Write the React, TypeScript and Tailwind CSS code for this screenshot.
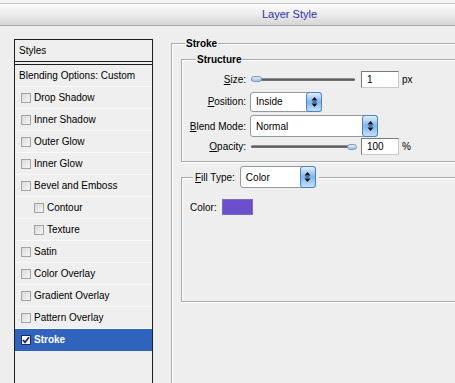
import React from "react";

function Check({ checked = false }: { checked?: boolean }) {
  if (checked) {
    return (
      <div className="w-[10px] h-[10px] bg-white border border-[#1c2a6b] flex items-center justify-center shrink-0">
        <svg width="8" height="8" viewBox="0 0 8 8">
          <path d="M1 4 L3 6.3 L7 1.3" stroke="#1b1f7a" strokeWidth="1.8" fill="none" />
        </svg>
      </div>
    );
  }
  return (
    <div className="w-[10px] h-[10px] border border-[#a3a3a3] bg-gradient-to-br from-[#d9d9d9] to-[#f7f7f7] shrink-0" />
  );
}

function Row({
  label,
  indent = false,
  selected = false,
}: {
  label: string;
  indent?: boolean;
  selected?: boolean;
}) {
  return (
    <div
      className={
        selected
          ? "h-[22px] flex items-center gap-[3px] pl-[6px] bg-[#3063bb] text-white font-bold border-b border-[#3063bb]"
          : indent
          ? "h-[22px] flex items-center gap-[3px] pl-[19px] border-b border-[#f9f9f9]"
          : "h-[22px] flex items-center gap-[3px] pl-[6px] border-b border-[#f9f9f9]"
      }
    >
      <Check checked={selected} />
      <span className="leading-none">{label}</span>
    </div>
  );
}

function Spinner() {
  return (
    <div className="w-[16px] -my-[1px] -mr-[1px] rounded-[3px] border border-[#4b82c8] bg-gradient-to-b from-[#e2effd] via-[#7fb4ee] to-[#c4e0fb] flex items-center justify-center shrink-0">
      <svg width="7" height="12" viewBox="0 0 7 12">
        <polygon points="3.5,1 6.5,4.5 0.5,4.5" fill="#111" />
        <rect x="1.5" y="5.6" width="4" height="0.8" fill="#111" />
        <polygon points="0.5,7.5 6.5,7.5 3.5,11" fill="#111" />
      </svg>
    </div>
  );
}

function Select({ cls, text }: { cls: string; text: string }) {
  return (
    <div className={cls}>
      <div className="flex-1 flex items-center pl-[5px] text-[10px] text-black">{text}</div>
      <Spinner />
    </div>
  );
}

function Slider({ right = false }: { right?: boolean }) {
  return (
    <div className="relative w-[104px] h-[8px] flex items-center">
      <div className="w-full h-[3px] rounded-full bg-gradient-to-b from-[#a9a9a9] via-[#5e5e5e] to-[#7a7a7a]" />
      <div
        className={
          right
            ? "absolute right-[-2px] top-[1px] w-[10px] h-[6px] rounded-full border border-[#7f9cbc] bg-gradient-to-b from-[#e4eef9] to-[#9dbfe2]"
            : "absolute left-[0px] top-[1px] w-[11px] h-[6px] rounded-full border border-[#7f9cbc] bg-gradient-to-b from-[#e4eef9] to-[#9dbfe2]"
        }
      />
    </div>
  );
}

function Field({ value }: { value: string }) {
  return (
    <div className="w-[38px] h-[17px] bg-white border border-[#7b7b7b] border-r-[#c9c9c9] border-b-[#c9c9c9] flex items-center pl-[5px] text-[10px]">
      {value}
    </div>
  );
}

export default function App() {
  return (
    <div
      className="w-[455px] h-[383px] overflow-hidden bg-[#eeeeee] text-black text-[10px]"
      style={{ fontFamily: '"Liberation Sans", Arial, sans-serif' }}
    >
      {/* title bar */}
      <div className="h-[26px] pt-[3px] bg-[#f3f3f3]">
        <div className="h-[23px] border-t border-[#c4c4c4] border-b border-b-[#a9a9a9] bg-gradient-to-b from-[#fbfbfb] via-[#ececec] to-[#d6d6d6] flex items-center pl-[262px] text-[11px] text-[#2f2fae]">
          Layer Style
        </div>
      </div>

      <div className="flex h-[357px]">
        {/* left list */}
        <div className="w-[171px] shrink-0 pt-[13px] pl-[14px]">
          <div className="w-[139px] h-[400px] border border-[#1e1e1e] bg-[#efefef]">
            <div className="h-[22px] flex items-center pl-[4px] border-b border-[#1e1e1e]">Styles</div>
            <div className="h-[2px]" />
            <div className="h-[23px] flex items-center pl-[4px] border-t border-[#1e1e1e] border-b border-b-[#f9f9f9]">
              Blending Options: Custom
            </div>
            <Row label="Drop Shadow" />
            <Row label="Inner Shadow" />
            <Row label="Outer Glow" />
            <Row label="Inner Glow" />
            <Row label="Bevel and Emboss" />
            <Row label="Contour" indent />
            <Row label="Texture" indent />
            <Row label="Satin" />
            <Row label="Color Overlay" />
            <Row label="Gradient Overlay" />
            <Row label="Pattern Overlay" />
            <Row label="Stroke" selected />
          </div>
        </div>

        {/* right panel */}
        <div className="flex-1 pt-[17px]">
          <div className="relative w-[400px] h-[400px] border-t border-l border-[#ababab] shadow-[inset_1px_1px_0_#ffffff]">
            <div className="absolute left-[13px] -top-[7px] px-[1px] bg-[#eeeeee] font-bold leading-[13px]">Stroke</div>

            {/* Structure group */}
            <div className="relative ml-[9px] mt-[15px] w-[400px] border border-[#ababab] shadow-[inset_1px_1px_0_#ffffff,0_1px_0_#ffffff] pt-[10px] pb-[6px]">
              <div className="absolute left-[14px] -top-[7px] px-[1px] bg-[#eeeeee] font-bold leading-[13px]">Structure</div>

              <div className="flex items-center h-[18px]">
                <div className="w-[64px] text-right">
                  <u className="underline-offset-1">S</u>ize:
                </div>
                <div className="ml-[5px]">
                  <Slider />
                </div>
                <div className="ml-[6px]">
                  <Field value="1" />
                </div>
                <span className="ml-[3px]">px</span>
              </div>

              <div className="flex items-center h-[21px] mt-[3px]">
                <div className="w-[64px] text-right">
                  <u className="underline-offset-1">P</u>osition:
                </div>
                <Select
                  cls="ml-[4px] w-[72px] h-[20px] flex bg-white border border-[#9199a3] rounded-[3px]"
                  text="Inside"
                />
              </div>

              <div className="flex items-center h-[22px] mt-[3px]">
                <div className="w-[64px] text-right">
                  <u className="underline-offset-1">B</u>lend Mode:
                </div>
                <Select
                  cls="ml-[4px] w-[128px] h-[22px] flex bg-white border border-[#9199a3] rounded-[3px]"
                  text="Normal"
                />
              </div>

              <div className="flex items-center h-[17px] mt-[1px]">
                <div className="w-[64px] text-right">
                  <u className="underline-offset-1">O</u>pacity:
                </div>
                <div className="ml-[5px]">
                  <Slider right />
                </div>
                <div className="ml-[6px]">
                  <Field value="100" />
                </div>
                <span className="ml-[3px]">%</span>
              </div>
            </div>

            {/* Fill group */}
            <div className="relative ml-[9px] mt-[15px] w-[400px] h-[125px] border border-[#ababab] shadow-[inset_1px_1px_0_#ffffff,0_1px_0_#ffffff]">
              <div className="absolute left-[11px] -top-[12px] h-[22px] flex items-center gap-[5px] pl-[2px] pr-[3px] bg-[#eeeeee]">
                <span>
                  <u className="underline-offset-1">F</u>ill Type:
                </span>
                <Select
                  cls="w-[76px] h-[22px] flex bg-white border border-[#9199a3] rounded-[3px]"
                  text="Color"
                />
              </div>
              <div className="flex items-center h-[16px] mt-[21px] pl-[8px] gap-[5px]">
                <span>Color:</span>
                <div className="w-[31px] h-[16px] bg-[#6b4fcc] border border-[#7d6bb8]" />
              </div>
            </div>
          </div>
        </div>
      </div>
    </div>
  );
}
